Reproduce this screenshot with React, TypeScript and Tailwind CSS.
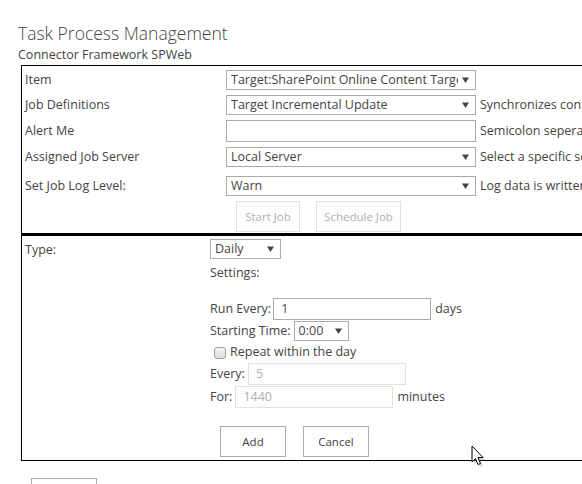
import React from 'react';

const font = { fontFamily: '"Open Sans", "Noto Sans", Arial, sans-serif' };

function Arrow() {
    return (
        <svg width="7" height="6" viewBox="0 0 7 6" className="shrink-0">
            <path d="M0 0.5 H7 L3.5 6 Z" fill="#444" />
        </svg>
    );
}

function FakeSelect({ value, className = '' }: { value: string; className?: string }) {
    return (
        <div className={`h-[20px] border border-[#ababab] bg-white flex items-center pl-[4px] pr-[6px] gap-[4px] ${className}`}>
            <span className="flex-1 overflow-hidden whitespace-nowrap leading-[18px]">{value}</span>
            <Arrow />
        </div>
    );
}

function TextBox({ value = '', disabled, className = '' }: { value?: string; disabled?: boolean; className?: string }) {
    return (
        <div
            className={`h-[22px] border flex items-center pl-[7px] leading-[20px] ${disabled ? 'border-[#e1e1e1] bg-[#fdfdfd] text-[#b1b1b1]' : 'border-[#ababab] bg-white text-[#444]'} ${className}`}
        >
            {value}
        </div>
    );
}

function Btn({ label, disabled, className = '' }: { label: string; disabled?: boolean; className?: string }) {
    return (
        <button
            className={`h-[31px] border text-[11.5px] bg-[#fdfdfd] ${disabled ? 'border-[#e1e1e1] text-[#b1b1b1]' : 'border-[#ababab] text-[#444]'} ${className}`}
        >
            {label}
        </button>
    );
}

const rows = [
    { label: 'Item', kind: 'select', value: 'Target:SharePoint Online Content Target', desc: '', gap: 'mt-0' },
    { label: 'Job Definitions', kind: 'select', value: 'Target Incremental Update', desc: 'Synchronizes content incrementally', gap: 'mt-[5px]' },
    { label: 'Alert Me', kind: 'input', value: '', desc: 'Semicolon seperated list of email addresses', gap: 'mt-[5px]' },
    { label: 'Assigned Job Server', kind: 'select', value: 'Local Server', desc: 'Select a specific server to run the job', gap: 'mt-[5px]' },
    { label: 'Set Job Log Level:', kind: 'select', value: 'Warn', desc: 'Log data is written to the job log', gap: 'mt-[9px]' },
];

export default function App() {
    return (
        <div className="relative w-[582px] h-[484px] overflow-hidden bg-white text-[#444] text-[12.5px]" style={font}>
            <div className="pl-[18px] pt-[21px]">
                <h1 className="text-[17.5px] font-light leading-[24px] text-[#444]">Task Process Management</h1>
                <div className="text-[12.5px] leading-[18px] mt-[1px]">Connector Framework SPWeb</div>
            </div>

            <div className="ml-[21px] mt-[1px] w-[640px] h-[170px] border border-black border-b-2 pl-[3px] pt-[4px]">
                {rows.map((r) => (
                    <div key={r.label} className={`flex items-center ${r.gap}`}>
                        <div className="w-[201px] shrink-0">{r.label}</div>
                        {r.kind === 'select' ? (
                            <FakeSelect value={r.value} className="w-[250px] shrink-0" />
                        ) : (
                            <TextBox className="w-[250px] shrink-0" />
                        )}
                        <div className="pl-[4px] whitespace-nowrap">{r.desc}</div>
                    </div>
                ))}
                <div className="flex gap-[16px] mt-[5px] pl-[211px]">
                    <Btn label="Start Job" disabled className="w-[64px]" />
                    <Btn label="Schedule Job" disabled className="w-[85px]" />
                </div>
            </div>

            <div className="ml-[21px] w-[640px] h-[226px] border border-black pl-[3px] pt-[3px] flex">
                <div className="w-[185px] shrink-0 leading-[20px] pt-[1px]">Type:</div>
                <div className="flex flex-col">
                    <FakeSelect value="Daily" className="w-[71px]" />
                    <div className="leading-[18px] mt-[5px]">Settings:</div>
                    <div className="flex items-center gap-[2px] mt-[16px]">
                        <span>Run Every:</span>
                        <TextBox value="1" className="w-[158px]" />
                        <span className="ml-[2px]">days</span>
                    </div>
                    <div className="flex items-center gap-[3px] mt-[1px]">
                        <span>Starting Time:</span>
                        <FakeSelect value="0:00" className="w-[55px]" />
                    </div>
                    <div className="flex items-center gap-[4px] h-[22px] pl-[4px] pt-[1px]">
                        <span className="w-[12px] h-[12px] rounded-[3px] border border-[#a0a0a0] bg-gradient-to-b from-[#f4f4f4] to-[#dcdcdc]" />
                        <span>Repeat within the day</span>
                    </div>
                    <div className="flex items-center gap-[3px]">
                        <span>Every:</span>
                        <TextBox value="5" disabled className="w-[158px]" />
                    </div>
                    <div className="flex items-center gap-[3px] mt-[1px]">
                        <span>For:</span>
                        <TextBox value="1440" disabled className="w-[158px]" />
                        <span className="ml-[1px]">minutes</span>
                    </div>
                    <div className="flex gap-[17px] mt-[18px] pl-[10px]">
                        <Btn label="Add" className="w-[66px]" />
                        <Btn label="Cancel" className="w-[66px]" />
                    </div>
                </div>
            </div>

            <div className="ml-[31px] mt-[17px] w-[66px] h-[31px] border border-[#ababab] bg-[#fdfdfd]" />

            <svg className="absolute left-[471px] top-[445px]" width="14" height="22" viewBox="0 0 14 22">
                <path d="M2 2 V18 L5.5 14.5 L8 20.5 L10.5 19.5 L8 13.5 H13 Z" fill="#888" opacity="0.35" transform="translate(1.2 1.2)" />
                <path d="M1 1 V17 L4.5 13.5 L7 19.5 L9.5 18.5 L7 12.5 H12 Z" fill="#fff" stroke="#000" strokeWidth="1" strokeLinejoin="miter" />
            </svg>
        </div>
    );
}
